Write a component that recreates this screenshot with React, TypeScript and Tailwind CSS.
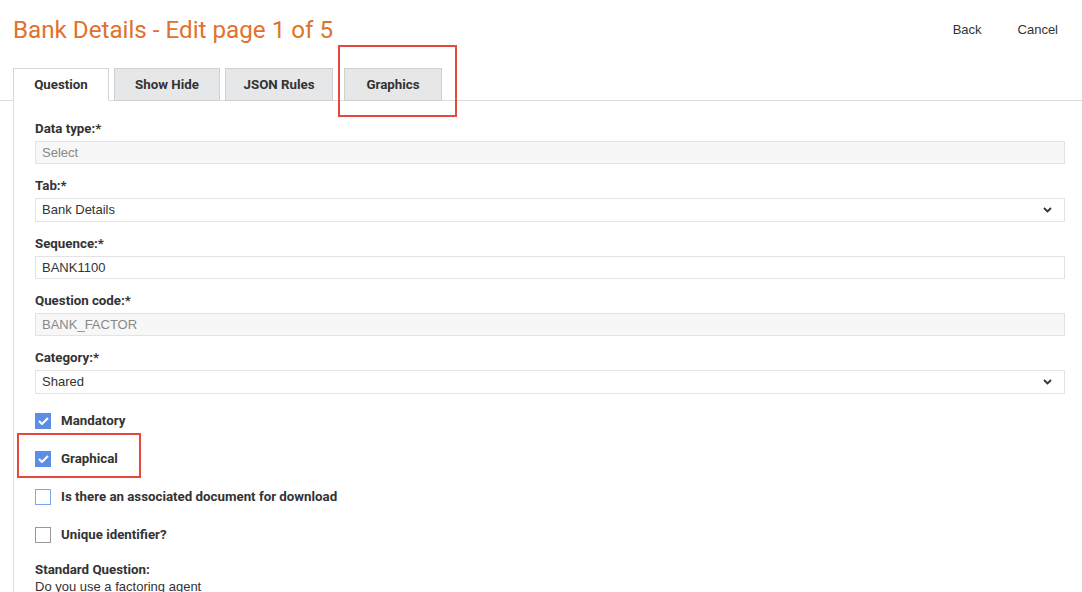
import React from 'react';

const tabs = ['Question', 'Show Hide', 'JSON Rules', 'Graphics'];

function Label({ children }: { children: React.ReactNode }) {
  return (
    <div className="mb-[4px] h-[16px] font-['Roboto',sans-serif] text-[13.3px] font-bold leading-[16px] text-[#333]">
      {children}
    </div>
  );
}

function TextField({ value, disabled }: { value: string; disabled?: boolean }) {
  return (
    <div
      className={`flex h-[23px] items-center border border-[#e3e3e3] px-[6px] font-['Liberation_Sans',Arial,sans-serif] text-[13px] ${
        disabled ? 'bg-[#f7f7f7] text-[#888]' : 'bg-white text-[#333]'
      }`}
    >
      {value}
    </div>
  );
}

function SelectField({ value }: { value: string }) {
  return (
    <div className="flex h-[24px] items-center justify-between border border-[#e3e3e3] bg-white pl-[6px] pr-[12px] font-['Liberation_Sans',Arial,sans-serif] text-[13px] text-[#333]">
      <span>{value}</span>
      <svg width="9" height="6" viewBox="0 0 9 6">
        <path d="M1 1l3.5 3.5L8 1" fill="none" stroke="#333" strokeWidth="1.8" />
      </svg>
    </div>
  );
}

function Check({ label, checked, blueBorder }: { label: string; checked?: boolean; blueBorder?: boolean }) {
  return (
    <div className="flex h-[16px] items-center gap-[10px]">
      {checked ? (
        <span className="flex h-[16px] w-[16px] items-center justify-center bg-[#5b8fe6]">
          <svg width="11" height="8" viewBox="0 0 11 8">
            <path d="M1 4l3 3 6-6" fill="none" stroke="#fff" strokeWidth="2" />
          </svg>
        </span>
      ) : (
        <span
          className={`h-[16px] w-[16px] border bg-white ${blueBorder ? 'border-[#7fa5ea]' : 'border-[#999]'}`}
        />
      )}
      <span className="font-['Roboto',sans-serif] text-[13.3px] font-bold text-[#333]">{label}</span>
    </div>
  );
}

export default function App() {
  return (
    <div className="h-[592px] w-[1082px] overflow-hidden bg-white">
      <div className="flex items-start justify-between pl-[13px] pr-[24px] pt-[16px]">
        <h1 className="font-['Roboto',sans-serif] text-[24.2px] leading-[28px] text-[#e0722d]">
          Bank Details - Edit page 1 of 5
        </h1>
        <div className="flex gap-[36px] pt-[4px] font-['Liberation_Sans',Arial,sans-serif] text-[13px] text-[#333]">
          <span>Back</span>
          <span>Cancel</span>
        </div>
      </div>

      <div className="relative mt-[24px] flex gap-[5px] border-b border-[#dcdcdc] pl-[13px]">
        {tabs.map((t, i) => (
          <div
            key={t}
            className={`-mb-px flex h-[33px] items-center justify-center border font-['Roboto',sans-serif] text-[13.3px] font-bold text-[#333] ${
              i === 0
                ? 'w-[96px] border-[#d6d6d6] border-b-white bg-white'
                : i === 1
                  ? 'w-[106px] border-[#d0d0d0] bg-[#e6e7e8]'
                  : i === 2
                    ? 'w-[108px] border-[#d0d0d0] bg-[#e6e7e8]'
                    : 'ml-[6px] w-[98px] border-[#d0d0d0] bg-[#e6e7e8]'
            }`}
          >
            {t}
          </div>
        ))}
        <div className="absolute left-[338px] top-[-23px] h-[72px] w-[119px] border-2 border-[#e5483f]" />
      </div>

      <div className="relative ml-[13px] border-l border-[#dcdcdc] pb-[20px] pl-[21px] pr-[17px] pt-[20px]">
        <Label>Data type:*</Label>
        <TextField value="Select" disabled />
        <div className="h-[14px]" />
        <Label>Tab:*</Label>
        <SelectField value="Bank Details" />
        <div className="h-[14px]" />
        <Label>Sequence:*</Label>
        <TextField value="BANK1100" />
        <div className="h-[14px]" />
        <Label>Question code:*</Label>
        <TextField value="BANK_FACTOR" disabled />
        <div className="h-[14px]" />
        <Label>Category:*</Label>
        <SelectField value="Shared" />

        <div className="mt-[19px] flex flex-col gap-[22px]">
          <Check label="Mandatory" checked />
          <Check label="Graphical" checked />
          <Check label="Is there an associated document for download" blueBorder />
          <Check label="Unique identifier?" />
        </div>
        <div className="absolute left-[3px] top-[332px] h-[45px] w-[124px] border-2 border-[#e5483f]" />

        <div className="mt-[19px] font-['Roboto',sans-serif] text-[13.3px] font-bold leading-[16px] text-[#333]">
          Standard Question:
        </div>
        <div className="mt-[1px] font-['Liberation_Sans',Arial,sans-serif] text-[13px] leading-[16px] text-[#333]">
          Do you use a factoring agent
        </div>
      </div>
    </div>
  );
}
